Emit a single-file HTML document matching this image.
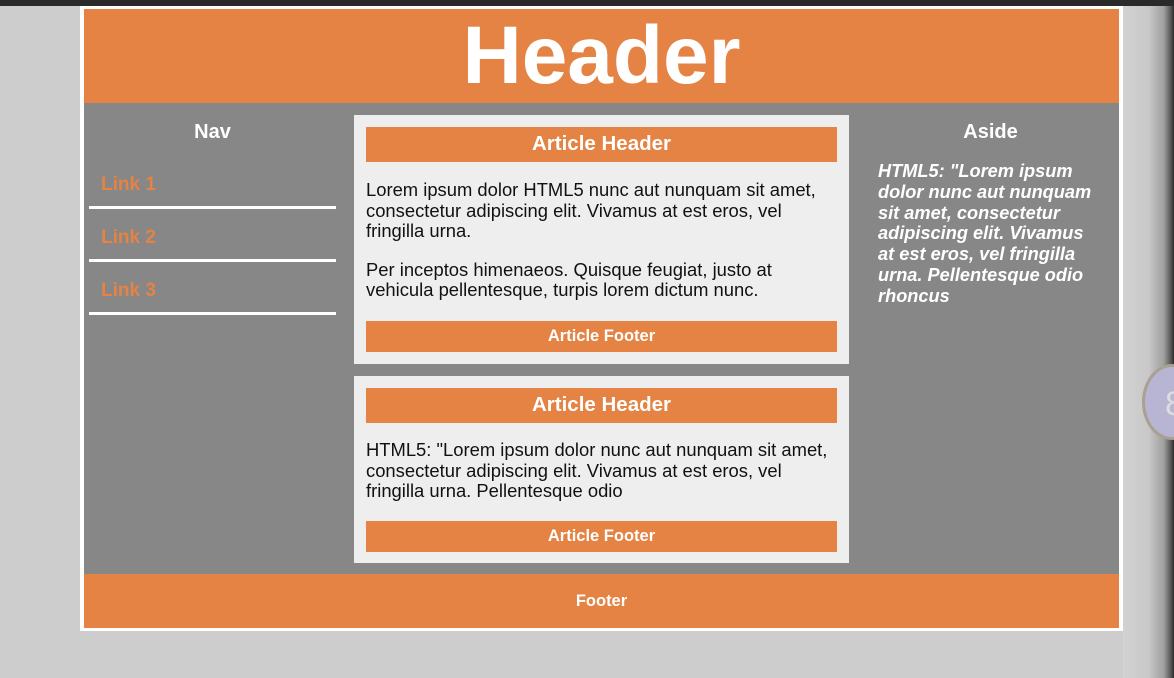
<!DOCTYPE html>
<html><head><style>
*{margin:0;padding:0;box-sizing:border-box}
body{width:1174px;height:678px;background:#cdcdcd;font-family:"Liberation Sans",Arial,sans-serif;position:relative;overflow:hidden}
.top{position:absolute;left:0;top:0;width:1174px;height:6px;background:#2a2a2a}
.rs{position:absolute;left:1123px;top:6px;width:51px;height:672px;background:linear-gradient(90deg,#d2d2d2,#c8c8c8 50%,#a0a0a0 80%,#505050 95%,#2a2a2a)}
.circ{position:absolute;left:1142px;top:364px;width:60px;height:76px;border-radius:50%;background:#b8b4d4;border:3px solid #a8a090;color:#ddd;font-size:34px;padding:18px 0 0 20px}
.frame{position:absolute;left:80px;top:6px;width:1043px;height:625px;background:#fff}
.hdr{position:absolute;left:84px;top:9px;width:1035px;height:95px;background:#e48343;color:#fff;font-weight:bold;font-size:82px;text-align:center;line-height:94px}
.main{position:absolute;left:84px;top:103px;width:1035px;height:471px;background:#878787}
.ftr{position:absolute;left:84px;top:574px;width:1035px;height:54px;background:#e48343;color:#fff;font-weight:bold;font-size:16.5px;text-align:center;line-height:54px}
.nav h3,.aside h3{color:#fff;font-size:20px;text-align:center}
.nav{position:absolute;left:89px;top:121px;width:247px}
.nav a{display:block;color:#e48343;font-weight:bold;font-size:19px;padding:0 12px;height:53px;line-height:58px;border-bottom:3px solid #fff}
.nav h3{margin-bottom:12px}
.art{position:absolute;left:354px;width:495px;background:#eeeeee;padding:12px}
.ah{background:#e48343;color:#fff;font-weight:bold;font-size:20.5px;text-align:center;height:35px;line-height:34px}
.af{background:#e48343;color:#fff;font-weight:bold;font-size:16.5px;text-align:center;height:31px;line-height:31px}
.art p{font-size:18.4px;line-height:20.5px;color:#111;margin:0}
.aside{position:absolute;left:878px;top:121px;width:225px}
.aside h3{margin-bottom:17px}
.aside p{color:#fff;font-weight:bold;font-style:italic;font-size:18.2px;line-height:20.8px}
</style></head><body>
<div class="top"></div><div class="rs"></div><div class="circ">8</div>
<div class="frame"></div>
<div class="hdr">Header</div>
<div class="main"></div>
<div class="nav"><h3>Nav</h3><a>Link 1</a><a>Link 2</a><a>Link 3</a></div>
<div class="art" style="top:115px;height:249px">
<div class="ah">Article Header</div>
<p style="margin-top:18px">Lorem ipsum dolor HTML5 nunc aut nunquam sit amet, consectetur adipiscing elit. Vivamus at est eros, vel fringilla urna.</p>
<p style="margin-top:18px">Per inceptos himenaeos. Quisque feugiat, justo at vehicula pellentesque, turpis lorem dictum nunc.</p>
<div class="af" style="margin-top:20px">Article Footer</div>
</div>
<div class="art" style="top:376px;height:187px">
<div class="ah">Article Header</div>
<p style="margin-top:17px">HTML5: "Lorem ipsum dolor nunc aut nunquam sit amet, consectetur adipiscing elit. Vivamus at est eros, vel fringilla urna. Pellentesque odio</p>
<div class="af" style="margin-top:19px">Article Footer</div>
</div>
<div class="aside"><h3>Aside</h3><p>HTML5: "Lorem ipsum dolor nunc aut nunquam sit amet, consectetur adipiscing elit. Vivamus at est eros, vel fringilla urna. Pellentesque odio rhoncus</p></div>
<div class="ftr">Footer</div>
</body></html>
